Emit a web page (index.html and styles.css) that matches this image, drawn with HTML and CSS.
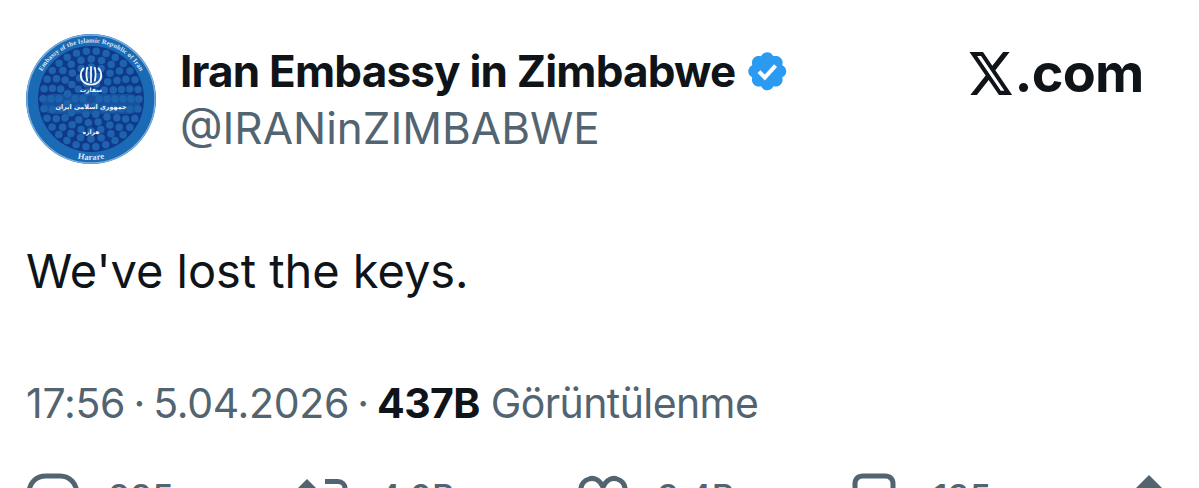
FILE: index.html
```html
<!DOCTYPE html>
<html lang="en">
<head>
<meta charset="utf-8">
<title>Iran Embassy in Zimbabwe</title>
<link rel="stylesheet" href="styles.css">
</head>
<body>
<main class="tweet">
  <header class="head">
    <svg class="avatar" viewBox="0 0 130 130" aria-hidden="true">
      <defs>
        <path id="arc-top" d="M9.500 72 A56 56 0 1 1 120.500 72"/>
        <path id="arc-bot" d="M30 115 A61 61 0 0 0 100 115"/>
      </defs>
      <circle cx="65" cy="65" r="65" fill="#1a6ab5"/>
      <circle cx="65" cy="65" r="64" fill="none" stroke="#7fb0dc" stroke-width="1.4"/>
      <circle cx="65" cy="65" r="53" fill="#0f3a8c"/>
      <g class="dots">
        <circle cx="65" cy="65" r="48" stroke-dasharray="0 10.05"/>
        <circle cx="65" cy="65" r="40" stroke-dasharray="0 10.47"/>
        <circle cx="65" cy="65" r="32" stroke-dasharray="0 10.05"/>
        <circle cx="65" cy="65" r="24" stroke-dasharray="0 10.05"/>
        <circle cx="65" cy="65" r="16" stroke-dasharray="0 10.05"/>
        <circle cx="65" cy="65" r="8" stroke-dasharray="0 8.38"/>
      </g>
      <rect x="16" y="60" width="98" height="20" rx="10" fill="#1c62ad" opacity=".6"/>
      <text class="rim"><textPath href="#arc-top" startOffset="50%" text-anchor="middle">Embassy of the Islamic Republic of Iran</textPath></text>
      <text class="rim rim-b"><textPath href="#arc-bot" startOffset="50%" text-anchor="middle">Harare</textPath></text>
      <g class="emblem">
        <path d="M65 29v21M60.500 30c-1.500 5-1.500 12 0 18M69.500 30c1.500 5 1.500 12 0 18"/>
        <path d="M56 31c-5 5-5 14 0 18 2 2 5 3 9 3s7-1 9-3c5-4 5-13 0-18"/>
      </g>
      <text class="fa fa-s" x="65" y="58">سفارت</text>
      <text class="fa fa-l" x="65" y="75">جمهوری اسلامی ایران</text>
      <text class="fa fa-s" x="65" y="100">هراره</text>
    </svg>
    <div class="who">
      <div class="name-row">
        <span class="name">Iran Embassy in Zimbabwe</span>
        <svg class="badge" viewBox="0 0 22 22" aria-hidden="true">
          <path fill="#2a9bf0" d="M20.400 11c0-1.300-.8-2.500-2-3 .4-1.300.2-2.700-.8-3.600-.9-1-2.300-1.200-3.600-.8-.5-1.200-1.700-2-3-2s-2.500.8-3 2c-1.300-.4-2.700-.2-3.600.8-1 .9-1.200 2.300-.8 3.600-1.200.5-2 1.700-2 3s.8 2.500 2 3c-.4 1.300-.2 2.700.8 3.600.9 1 2.300 1.200 3.600.8.5 1.200 1.700 2 3 2s2.500-.8 3-2c1.300.4 2.700.2 3.600-.8 1-.9 1.200-2.300.8-3.600 1.200-.5 2-1.700 2-3z"/>
          <path fill="none" stroke="#fff" stroke-width="2" d="M6.900 11.200l2.900 2.900 5.300-5.900"/>
        </svg>
      </div>
      <div class="handle">@IRANinZIMBABWE</div>
    </div>
    <div class="brand">
      <svg class="x-logo" viewBox="0 0 24 24" preserveAspectRatio="none" aria-hidden="true"><path d="M18.244 2.250h3.308l-7.227 8.260 8.502 11.240H16.170l-5.214-6.817L4.990 21.750H1.680l7.730-8.835L1.254 2.250H8.080l4.713 6.231zm-1.161 17.520h1.833L7.084 4.126H5.117z"/></svg>
      <span>.com</span>
    </div>
  </header>
  <p class="body-text">We've lost the keys.</p>
  <p class="meta"><span class="stamp">17:56 · 5.04.2026 · </span><b>437B</b> Görüntülenme</p>
  <footer class="actions">
    <div class="act act-reply">
      <svg class="ic ic-reply" viewBox="0 0 54 48" aria-hidden="true"><path d="M20 3h14c10 0 17 8 17 18 0 11-9 17-17 22v-6H20C10 37 3 30 3 20S10 3 20 3z"/></svg>
      <span>885</span>
    </div>
    <div class="act act-rt">
      <svg class="ic ic-rt" viewBox="0 0 62 48" aria-hidden="true"><path class="solid" d="M17 6l14 14H3z"/><path d="M17 16v22c0 3 2 5 5 5h13M35 8.500h13c4 0 7 3 7 7V38"/></svg>
      <span>4,0B</span>
    </div>
    <div class="act act-like">
      <svg class="ic ic-like" viewBox="0 0 50 48" aria-hidden="true"><path d="M25 14C22 7 16 4 11 6 5 8 2 13 3 20c1 10 13 19 22 24 9-5 21-14 22-24 1-7-2-12-8-14-5-2-11 1-14 8z"/></svg>
      <span>3,4B</span>
    </div>
    <div class="act act-mark">
      <svg class="ic ic-mark" viewBox="0 0 44 48" aria-hidden="true"><path d="M11 3h22c5 0 8 3 8 8v35L22 33 3 46V11c0-5 3-8 8-8z"/></svg>
      <span>135</span>
    </div>
    <div class="act act-share">
      <svg class="ic ic-share" viewBox="0 0 44 48" aria-hidden="true"><path class="solid" d="M22 2l17 17H5z"/><path d="M22 12v24M5 30v8c0 4 3 7 7 7h20c4 0 7-3 7-7v-8"/></svg>
    </div>
  </footer>
</main>
</body>
</html>
```
FILE: styles.css
```css
html, body {
  margin: 0;
  height: 488px;
  overflow: hidden;
  background: #fff;
}
body {
  font-family: Inter, "Liberation Sans", sans-serif;
  color: #0f1419;
}
.tweet {
  display: flex;
  flex-direction: column;
  height: 488px;
  padding: 34px 0 0 26px;
  box-sizing: border-box;
  overflow: hidden;
}
.head {
  display: flex;
  align-items: flex-start;
}
.avatar {
  width: 130px;
  height: 130px;
  flex: none;
}
.dots circle {
  fill: none;
  stroke: #1f62ad;
  stroke-width: 7.5;
  stroke-linecap: round;
}
.rim {
  font: 700 6.6px "Liberation Serif", serif;
  fill: #dbe9f6;
  letter-spacing: .15px;
}
.rim-b {
  font-size: 8.5px;
}
.emblem {
  fill: none;
  stroke: #f2f7fc;
  stroke-width: 2.2;
  transform: translate(13px, 9px) scale(.8);
}
.fa {
  font-family: "DejaVu Sans", sans-serif;
  fill: #f2f7fc;
  text-anchor: middle;
  direction: rtl;
}
.fa-s { font-size: 6px; font-weight: 700; }
.fa-l { font-size: 6.4px; font-weight: 700; }
.who {
  margin-left: 24px;
  padding-top: 13px;
  width: 787px;
  flex: none;
}
.name-row {
  display: flex;
  align-items: center;
  gap: 9px;
  height: 48px;
}
.name {
  font-size: 44px;
  font-weight: 700;
  letter-spacing: -.8px;
}
.badge {
  width: 44.5px;
  height: 44.5px;
  flex: none;
}
.handle {
  margin-top: 9px;
  font-size: 44px;
  line-height: 48px;
  color: #536471;
}
.brand {
  display: flex;
  align-items: center;
  margin-top: 11px;
  font-size: 54px;
  font-weight: 700;
  line-height: 56px;
  letter-spacing: -.8px;
}
.x-logo {
  width: 47.5px;
  height: 53px;
  fill: #0f1419;
  flex: none;
}
.body-text {
  margin: 81px 0 0;
  font-size: 47px;
  line-height: 52px;
  letter-spacing: -.05px;
}
.meta {
  margin: 81px 0 0;
  font-size: 41px;
  line-height: 50px;
  color: #536471;
  letter-spacing: -.6px;
}
.stamp {
  word-spacing: -3px;
  letter-spacing: -.3px;
}
.meta b {
  color: #0f1419;
}
.actions {
  display: flex;
  align-items: flex-start;
  margin-top: 45px;
  height: 60px;
}
.act {
  display: flex;
  align-items: flex-start;
  color: #536471;
  font-size: 35px;
  font-weight: 500;
  line-height: 44px;
  flex: none;
}
.act span { margin-top: 2px; }
.ic {
  flex: none;
  fill: none;
  stroke: #536471;
  stroke-width: 5;
  height: 48px;
}
.ic .solid { fill: #536471; stroke: none; }
.ic-reply { width: 54px; margin-right: 28px; }
.ic-rt { width: 62px; margin-right: 26px; }
.ic-like { width: 50px; margin-right: 29px; }
.ic-mark { width: 44px; margin-right: 37px; }
.ic-share { width: 44px; }
.act-reply { width: 264px; }
.act-rt { width: 288px; }
.act-like { width: 274px; }
.act-mark { width: 275px; }
```
